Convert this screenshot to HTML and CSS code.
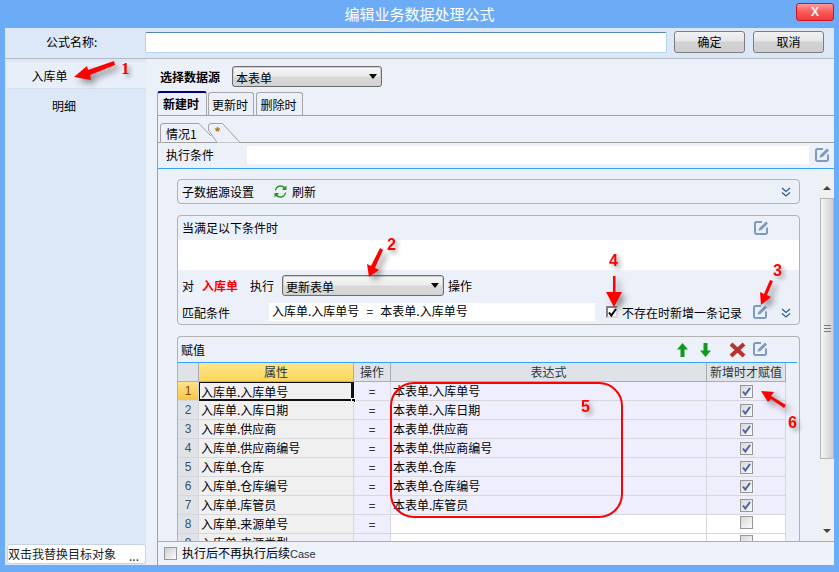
FILE: index.html
```html
<!DOCTYPE html>
<html lang="zh">
<head>
<meta charset="utf-8">
<title>编辑业务数据处理公式</title>
<link rel="stylesheet" href="styles.css">
</head>
<body>
<svg class="defs" width="0" height="0" aria-hidden="true">
  <symbol id="edit" viewBox="1 1 15 15">
    <path d="M9 2H3.500A1.500 1.500 0 0 0 2 3.500v9A1.500 1.500 0 0 0 3.500 14h9a1.500 1.500 0 0 0 1.500-1.500V7.500" fill="none" stroke="#7e9ac0" stroke-width="2"/>
    <path d="M13 1.500 15 3.500 8.500 10 5.500 10.800 6.300 8Z" fill="#7e9ac0"/>
  </symbol>
  <symbol id="chev" viewBox="0 0 10 10">
    <path d="M1 1l4 3.500L9 1M1 5.500 5 9l4-3.500" fill="none" stroke="#2f5c9c" stroke-width="1.300"/>
  </symbol>
  <symbol id="tick" viewBox="0 0 9 9">
    <path d="M1 4.500 3.300 7.500 8 1" fill="none" stroke="#4a62a8" stroke-width="2"/>
  </symbol>
</svg>

<header class="titlebar">
  <span></span>
  <h1 class="title">编辑业务数据处理公式</h1>
  <button class="close">X</button>
</header>

<main class="window">
  <div class="namerow">
    <label class="name-label">公式名称:</label>
    <div class="name-input"></div>
    <button class="btn btn-ok">确定</button>
    <button class="btn">取消</button>
  </div>

  <div class="body">
    <aside class="sidebar">
      <div class="side-item side-active">入库单</div>
      <div class="side-item side-plain">明细</div>
      <div class="side-bottom"><span>双击我替换目标对象</span><span class="dots">...</span></div>
    </aside>

    <section class="content">
      <div class="source-row">
        <strong class="source-label">选择数据源</strong>
        <div class="select select-source">本表单</div>
      </div>
      <nav class="tabs">
        <div class="tab tab-active">新建时</div>
        <div class="tab tab-update">更新时</div>
        <div class="tab">删除时</div>
      </nav>

      <div class="tabpane">
        <div class="casetabs">
          <div class="casetab casetab-1">
            <svg class="casetab-shape" width="60" height="20" viewBox="0 0 60 20"><path d="M.5 19.500V3Q.5.500 3 .500H39L51 13" fill="#ecf0f9" stroke="#a0a0a0"/></svg>
            <span class="casetab-text">情况1</span>
          </div>
          <div class="casetab casetab-2">
            <svg class="casetab-shape" width="34" height="20" viewBox="0 0 34 20"><path d="M9 19.500.5 7V3Q.5.500 3 .500H14.500L32 19.500" fill="#ecf0f9" stroke="#a0a0a0"/></svg>
            <span class="casetab-star">*</span>
          </div>
        </div>

        <div class="condrow">
          <span class="cond-label">执行条件</span>
          <div class="cond-input"></div>
          <svg class="ico16"><use href="#edit"/></svg>
        </div>

        <div class="scrollarea">
          <div class="panel">
            <div class="card card-sub">
              <span>子数据源设置</span>
              <svg class="refresh" width="13" height="13" viewBox="0 0 13 13"><path d="M2 5.500A4.500 4.500 0 0 1 9.500 3L8 5h4.500V.5L11 2A6 6 0 0 0 .8 5.500ZM11 7.500A4.500 4.500 0 0 1 3.500 10L5 8H.5v4.500L2 11A6 6 0 0 0 12.200 7.500Z" fill="#1f9a1f"/></svg>
              <span class="refresh-text">刷新</span>
              <svg class="chev chev-sub"><use href="#chev"/></svg>
            </div>

            <div class="card card-when">
              <div class="when-head">
                <span>当满足以下条件时</span>
                <svg class="ico16 when-edit"><use href="#edit"/></svg>
              </div>
              <div class="when-band"></div>
              <div class="when-action">
                <span class="w-dui">对</span>
                <strong class="w-target">入库单</strong>
                <span>执行</span>
                <div class="select select-op">更新表单</div>
                <span class="w-op">操作</span>
              </div>
              <div class="when-match">
                <span class="m-label">匹配条件</span>
                <div class="m-input">入库单.入库单号 = 本表单.入库单号</div>
                <span class="check-big"><svg width="9" height="9"><use href="#tick"/></svg></span>
                <span class="m-check">不存在时新增一条记录</span>
                <svg class="ico16 m-edit"><use href="#edit"/></svg>
                <svg class="chev m-chev"><use href="#chev"/></svg>
              </div>
            </div>

            <div class="card card-assign">
              <div class="assign-head">
                <span class="assign-title">赋值</span>
                <svg class="a-up" width="11" height="14" viewBox="0 0 11 14"><path d="M5.500 0 11 6.500H7.500V14h-4V6.500H0Z" fill="#0f9a1e"/></svg>
                <svg class="a-down" width="11" height="14" viewBox="0 0 11 14"><path d="M5.500 14 11 7.500H7.500V0h-4v7.500H0Z" fill="#0f9a1e"/></svg>
                <svg class="a-del" width="17" height="16" viewBox="0 0 17 16"><path d="M2 2 15 14M15 2 2 14" stroke="#b93232" stroke-width="4"/></svg>
                <svg class="ico16"><use href="#edit"/></svg>
              </div>
              <div class="grid-wrap">
                <table class="grid">
                  <colgroup><col class="c0"><col class="c1"><col class="c2"><col class="c3"><col class="c4"></colgroup>
                  <thead><tr><th></th><th class="th-sel">属性</th><th>操作</th><th>表达式</th><th>新增时才赋值</th></tr></thead>
                  <tbody>
                    <tr class="filled"><th class="rh rh-sel">1</th><td class="attr attr-sel">入库单.入库单号<i class="handle"></i></td><td class="op">=</td><td class="expr">本表单.入库单号</td><td class="chk"><span class="cb"><svg width="9" height="9"><use href="#tick"/></svg></span></td></tr>
                    <tr class="filled"><th class="rh">2</th><td class="attr">入库单.入库日期</td><td class="op">=</td><td class="expr">本表单.入库日期</td><td class="chk"><span class="cb"><svg width="9" height="9"><use href="#tick"/></svg></span></td></tr>
                    <tr class="filled"><th class="rh">3</th><td class="attr">入库单.供应商</td><td class="op">=</td><td class="expr">本表单.供应商</td><td class="chk"><span class="cb"><svg width="9" height="9"><use href="#tick"/></svg></span></td></tr>
                    <tr class="filled"><th class="rh">4</th><td class="attr">入库单.供应商编号</td><td class="op">=</td><td class="expr">本表单.供应商编号</td><td class="chk"><span class="cb"><svg width="9" height="9"><use href="#tick"/></svg></span></td></tr>
                    <tr class="filled"><th class="rh">5</th><td class="attr">入库单.仓库</td><td class="op">=</td><td class="expr">本表单.仓库</td><td class="chk"><span class="cb"><svg width="9" height="9"><use href="#tick"/></svg></span></td></tr>
                    <tr class="filled"><th class="rh">6</th><td class="attr">入库单.仓库编号</td><td class="op">=</td><td class="expr">本表单.仓库编号</td><td class="chk"><span class="cb"><svg width="9" height="9"><use href="#tick"/></svg></span></td></tr>
                    <tr class="filled"><th class="rh">7</th><td class="attr">入库单.库管员</td><td class="op">=</td><td class="expr">本表单.库管员</td><td class="chk"><span class="cb"><svg width="9" height="9"><use href="#tick"/></svg></span></td></tr>
                    <tr><th class="rh">8</th><td class="attr">入库单.来源单号</td><td class="op">=</td><td class="expr"></td><td class="chk"><span class="cb"></span></td></tr>
                    <tr><th class="rh">9</th><td class="attr">入库单.来源类型</td><td class="op">=</td><td class="expr"></td><td class="chk"><span class="cb"></span></td></tr>
                  </tbody>
                </table>
              </div>
            </div>
          </div>

          <div class="scrollbar">
            <div class="sb-btn"><i class="sb-up"></i></div>
            <div class="sb-thumb"><i class="sb-grip"></i></div>
            <div class="sb-track"></div>
            <div class="sb-btn"><i class="sb-down"></i></div>
          </div>
        </div>

        <footer class="foot">
          <span class="foot-cb"></span>
          <span>执行后不再执行后续<span class="latin">Case</span></span>
        </footer>
      </div>
    </section>
  </div>
</main>

<svg class="notes" width="839" height="572" viewBox="0 0 839 572">
  <rect class="note-box" x="391" y="383" width="231" height="134" rx="23"/>
  <g class="note-arrows">
    <path d="M114 61 88 70 87 66 74 77 91 80 90 75 115 65Z"/>
    <path d="M380 248 371 266 367 264 369 277 379 270 375 268 383 250Z"/>
    <path d="M770 280 764 294 760 292 761 305 771 297 767 295 773 281Z"/>
    <path d="M613 276H615.500V292H622L614 307 606 292H613Z"/>
    <path d="M786 405 771 396 774 392 761 391 768 402 771 399 784 408Z"/>
  </g>
  <g class="note-nums">
    <text class="num-serif" x="121" y="74">1</text>
    <text x="387" y="250">2</text>
    <text x="773" y="276">3</text>
    <text x="609" y="266">4</text>
    <text x="581" y="412">5</text>
    <text x="788" y="428">6</text>
  </g>
</svg>
</body>
</html>
```
FILE: styles.css
```css
* { box-sizing: border-box; }
html, body { margin: 0; padding: 0; }
body {
  width: 839px;
  height: 572px;
  overflow: hidden;
  position: relative;
  background: #6cacf7;
  color: #000;
  font: 12px/16px "Noto Sans CJK SC", "Liberation Sans", sans-serif;
}
.defs { position: absolute; }
button { font: inherit; padding: 0; }

/* title bar */
.titlebar {
  height: 28px;
  display: grid;
  grid-template-columns: 1fr auto 1fr;
  align-items: start;
}
.title {
  margin: 4px 0 0;
  font-size: 15px;
  line-height: 20px;
  font-weight: 400;
  color: #fff;
}
.close {
  justify-self: end;
  width: 38px;
  height: 18px;
  margin: 3px 5px 0 0;
  border: 1px solid #d8101c;
  border-radius: 3px;
  background: linear-gradient(#ff9a9a, #fb5a5a 50%, #f13b3b);
  color: #fff;
  font: bold 12px/15px "Liberation Sans", sans-serif;
}

/* window */
.window { width: 829px; margin-left: 5px; height: 537px; background: #dce8f7; }
.namerow {
  height: 31px;
  padding: 3px 10px 0 0;
  display: flex;
  align-items: flex-start;
  border-bottom: 1px solid #b4b9c4;
}
.name-label { width: 140px; padding: 3px 47px 0 41px; white-space: nowrap; }
.name-input {
  width: 522px;
  height: 21px;
  margin: 1px 7px 0 0;
  background: #fff;
  border: 1px solid #b4d3ec;
  border-top-color: #4f86bb;
  border-radius: 2px;
}
.btn {
  width: 71px;
  height: 22px;
  border: 1px solid #7d7d7d;
  border-radius: 3px;
  background: linear-gradient(#f2f2f2, #e6e6e6 45%, #d2d2d2 50%, #cfcfcf);
  color: #000;
}
.btn-ok { margin-right: 8px; }

.body { height: 506px; display: grid; grid-template-columns: 141px 688px; }

/* sidebar */
.sidebar { padding: 3px 0 1px 2px; display: flex; flex-direction: column; }
.side-item { text-align: center; }
.side-active { height: 27px; line-height: 27px; padding-right: 54px; margin-bottom: 4px; background: #e9eff9; border-bottom: 1px solid #d2e0f2; }
.side-plain { height: 26px; line-height: 26px; padding-right: 25px; }
.side-bottom {
  margin-top: auto;
  height: 20px;
  display: flex;
  justify-content: space-between;
  padding: 1px 6px 0 0;
  background: #fff;
  border: 1px solid #c3d4ea;
  border-radius: 3px;
  color: #222;
}
.dots { line-height: 19px; }

/* content */
.content { background: #ecf0f9; display: flex; flex-direction: column; }
.source-row { height: 32px; padding: 7px 0 0 14px; display: flex; align-items: flex-start; gap: 8px; }
.source-label { line-height: 22px; width: 64px; }
.select {
  position: relative;
  height: 21px;
  padding: 2px 0 0 3px;
  border: 1px solid #6d6d6d;
  border-radius: 3px;
  background: linear-gradient(#f6f6f6, #ececec 45%, #d8d8d8 55%, #d4d4d4);
  line-height: 17px;
  box-shadow: inset 0 0 0 1px #d0d0d0;
}
.select::after {
  content: "";
  position: absolute;
  right: 4px;
  top: 7px;
  border: 4px solid transparent;
  border-top: 5px solid #000;
  border-bottom: 0;
}
.select-source { width: 150px; }
.tabs { height: 24px; margin-left: 11px; display: flex; align-items: flex-end; }
.tab {
  height: 23px;
  width: 47px;
  margin-right: 1px;
  padding-right: 2px;
  border: 1px solid #a6a6a6;
  border-bottom: 0;
  border-radius: 3px 3px 0 0;
  text-align: center;
  line-height: 23px;
}
.tab-update { width: 46px; margin-right: 2px; }
.tab-active {
  width: 50px;
  height: 24px;
  border: 0;
  border-top: 2px solid #000080;
  border-right: 1px solid #a6a6a6;
  border-left: 1px solid #a6a6a6;
  font-weight: 700;
  line-height: 21px;
}
.tabpane {
  flex: 1;
  min-height: 0;
  margin-left: 11px;
  border-left: 1px solid #a0a0a0;
  border-top: 1px solid #a0a0a0;
  display: flex;
  flex-direction: column;
}
.casetabs { height: 27px; padding: 7px 0 0 2px; border-bottom: 1px solid #a0a0a0; display: flex; }
.casetab { position: relative; height: 20px; }
.casetab-1 { width: 48px; }
.casetab-2 { width: 34px; }
.casetab-shape { position: absolute; left: 0; top: 0; }
.casetab-text { position: relative; display: block; padding: 3px 0 0 6px; }
.casetab-star { position: absolute; left: 7px; top: 1px; font: bold 13px/16px "Liberation Sans", sans-serif; color: #b5700a; }
.condrow {
  height: 26px;
  flex: none;
  display: flex;
  align-items: center;
  border-bottom: 1px solid #34a2f8;
  padding: 0 3px 1px 8px;
}
.cond-label { width: 81px; }
.cond-input { width: 562px; height: 18px; background: #fff; margin-right: 6px; }
.ico16 { width: 15px; height: 15px; display: block; flex: none; }

.scrollarea { height: 372px; flex: none; display: grid; grid-template-columns: 1fr 14px; overflow: hidden; }
.panel { padding: 10px 20px 0 19px; overflow: hidden; }
.card { border: 1px solid #b2b2b2; border-radius: 4px; margin-bottom: 11px; }
.card-sub { height: 25px; padding: 0 8px 0 4px; display: flex; align-items: center; gap: 6px; }
.refresh { margin-left: 14px; }
.refresh-text { margin-left: -1px; }
.chev { width: 10px; height: 10px; display: block; flex: none; }
.chev-sub { margin-left: auto; }
.card-when { height: 110px; }
.when-head { height: 24px; padding: 0 30px 0 4px; display: flex; align-items: center; justify-content: space-between; }
.when-band { height: 30px; background: #fff; }
.when-action { height: 33px; padding: 5px 0 0 4px; display: flex; align-items: flex-start; line-height: 21px; }
.w-dui { width: 20px; }
.w-target { width: 48px; color: #f00; }
.select-op { width: 162px; margin-left: 8px; }
.w-op { margin-left: 4px; }
.when-match { height: 18px; padding-left: 4px; display: flex; align-items: center; }
.m-label { width: 87px; padding-top: 1px; }
.m-input { width: 326px; height: 18px; background: #fff; padding-left: 3px; line-height: 15px; white-space: pre; word-spacing: 4.500px; }
.check-big {
  width: 12px;
  height: 12px;
  margin: 0 4px 0 11px;
  border: 2px solid #808080;
  border-right-color: #ddd;
  border-bottom-color: #ddd;
  background: #fff;
  display: flex;
}
.check-big svg { filter: grayscale(1) brightness(0); width: 9px; height: 9px; flex: none; }
.m-check { width: 131px; padding-top: 1px; white-space: nowrap; }
.m-edit { margin-top: 1px; }
.m-chev { margin: 1px 0 0 13px; }

.card-assign { margin-bottom: 0; border-bottom: 0; height: 220px; border-radius: 4px 4px 0 0; }
.assign-head { height: 25px; padding: 0 30px 0 3px; display: flex; align-items: center; }
.assign-title { width: 24px; flex: none; white-space: nowrap; }
.a-up { margin-left: 472px; flex: none; }
.a-down { margin-left: 12px; flex: none; }
.a-del { margin-left: 18px; flex: none; }
.assign-head .ico16 { margin-left: 7px; }
.grid-wrap { width: 619px; border-top: 1px solid #34a2f8; }
.grid { border-collapse: separate; border-spacing: 0; table-layout: fixed; width: 608px; }
.c0 { width: 21px; } .c1 { width: 155px; } .c2 { width: 37px; } .c3 { width: 316px; } .c4 { width: 79px; }
.grid tr { height: 19px; }
.grid th, .grid td { padding: 0; height: 19px; font-weight: 400; line-height: 16px; border-right: 1px solid #d5d7dc; border-bottom: 1px solid #d5d7dc; white-space: nowrap; overflow: hidden; }
.grid thead th { background: #dfe3e8; color: #2a3540; text-align: center; border-right-color: #a9aeb4; border-bottom-color: #a9aeb4; }
.grid thead .th-sel { background: linear-gradient(#ffe68a, #fdd65a); }
.grid .rh { background: #dfe3e8; color: #40505f; text-align: center; font: 12px/16px "Liberation Sans", sans-serif; }
.grid .rh-sel { background: linear-gradient(#ffe28a, #fbc545); color: #7a4b00; }
.attr { background: #f0f0f0; padding-left: 2px !important; position: relative; }
.attr-sel { overflow: visible !important; border: 0 !important; box-shadow: inset 0 0 0 1px #111, inset -2px -1px 0 1px #111; }
.handle { position: absolute; right: -2px; bottom: -2px; width: 5px; height: 5px; background: #000; border: 1px solid #fff; }
.op { background: #eeeefc; text-align: center; }
.expr { padding-left: 2px !important; background: #fff; }
.filled .expr, .filled .chk { background: #eeeefc; }
.chk { text-align: center; background: #fff; }
.cb {
  display: inline-flex;
  width: 13px;
  height: 13px;
  vertical-align: 0;
  padding: 0 0 0 1px;
  border: 1px solid #979797;
  background: linear-gradient(135deg, #d8d8d8, #fafafa);
  align-items: center;
}

/* scrollbar */
.scrollbar { padding-top: 9px; display: flex; flex-direction: column; background: linear-gradient(#ecf0f9 9px, #f0f0f0 9px); }
.sb-btn { height: 20px; flex: none; display: flex; align-items: center; justify-content: center; }
.sb-up { border: 4px solid transparent; border-bottom: 4px solid #444; border-top: 0; }
.sb-down { border: 4px solid transparent; border-top: 4px solid #444; border-bottom: 0; }
.sb-thumb {
  height: 261px;
  flex: none;
  border: 1px solid #b5b5b5;
  background: linear-gradient(90deg, #f6f6f6, #cfcfcf);
  display: flex;
  align-items: center;
  justify-content: center;
}
.sb-grip { width: 7px; height: 7px; border-top: 1px solid #777; border-bottom: 1px solid #777; background: linear-gradient(transparent 2px, #777 2px, #777 3px, transparent 3px); }
.sb-track { flex: 1; }

/* footer */
.foot {
  flex: 1;
  min-height: 0;
  border-top: 1px solid #9fb0c6;
  padding-left: 6px;
  background: #eef2fa;
  display: flex;
  align-items: center;
  gap: 5px;
}
.foot-cb { width: 13px; height: 13px; border: 1px solid #979797; background: linear-gradient(135deg, #cfcfcf, #fafafa); }
.latin { font: 11px/16px "Liberation Sans", sans-serif; color: #2a3540; }

/* annotations drawn over the screenshot */
.notes { position: absolute; left: 0; top: 0; pointer-events: none; }
.note-box { fill: none; stroke: #f00; stroke-width: 2; }
.note-arrows { fill: #f00; filter: drop-shadow(4px 4px 3px rgba(60,60,60,.55)); }
.note-nums { fill: #f00; font: bold 16px "Liberation Sans", sans-serif; filter: drop-shadow(3px 3px 2px rgba(60,60,60,.45)); }
.num-serif { font: bold 17px "Liberation Serif", serif; }
```
